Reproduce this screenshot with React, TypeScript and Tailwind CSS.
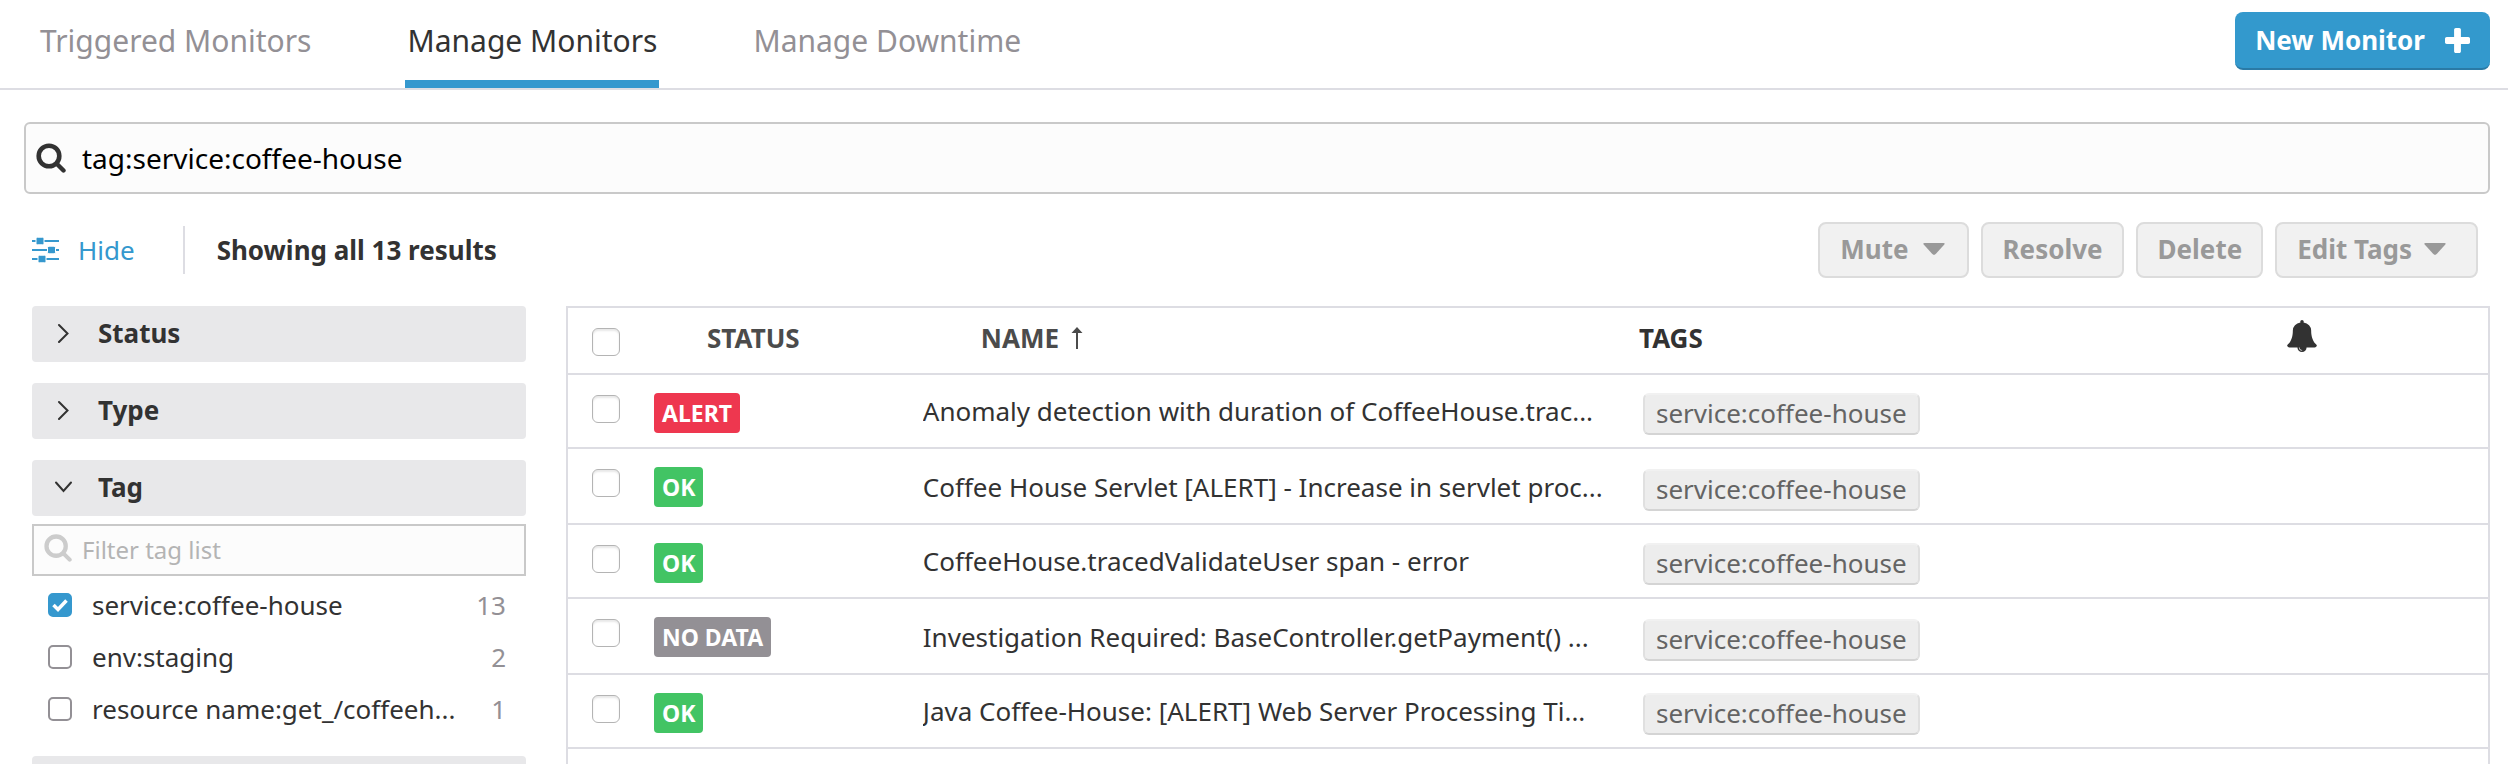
import { useState } from "react";
import type { ReactNode } from "react";

type Status = "ALERT" | "OK" | "NO DATA";

const monitors: { status: Status; name: string; tag: string }[] = [
  { status: "ALERT", name: "Anomaly detection with duration of CoffeeHouse.trac...", tag: "service:coffee-house" },
  { status: "OK", name: "Coffee House Servlet [ALERT] - Increase in servlet proc...", tag: "service:coffee-house" },
  { status: "OK", name: "CoffeeHouse.tracedValidateUser span - error", tag: "service:coffee-house" },
  { status: "NO DATA", name: "Investigation Required: BaseController.getPayment() ...", tag: "service:coffee-house" },
  { status: "OK", name: "Java Coffee-House: [ALERT] Web Server Processing Ti...", tag: "service:coffee-house" },
];

const statusColors: Record<Status, string> = {
  ALERT: "bg-[#ee374f]",
  OK: "bg-[#42c464]",
  "NO DATA": "bg-[#939095]",
};

const tagFilters = [
  { label: "service:coffee-house", count: 13, checked: true },
  { label: "env:staging", count: 2, checked: false },
  { label: "resource name:get_/coffeeh...", count: 1, checked: false },
];

const tabs = [
  { label: "Triggered Monitors", active: false },
  { label: "Manage Monitors", active: true },
  { label: "Manage Downtime", active: false },
];

function SearchIcon({ className }: { className: string }) {
  return (
    <svg viewBox="0 0 30 30" className={className} fill="none" stroke="currentColor" strokeLinecap="round" aria-hidden="true">
      <circle cx="13" cy="13" r="10.3" strokeWidth="4.6" />
      <path d="M21 21l6.500 6.500" strokeWidth="4.4" />
    </svg>
  );
}

function PlusIcon() {
  return (
    <svg viewBox="192 128 1408 1408" className="size-[25px]" fill="currentColor" aria-hidden="true">
      <path d="M1600 736v192q0 40-28 68t-68 28h-416v416q0 40-28 68t-68 28h-192q-40 0-68-28t-28-68v-416h-416q-40 0-68-28t-28-68v-192q0-40 28-68t68-28h416v-416q0-40 28-68t68-28h192q40 0 68 28t28 68v416h416q40 0 68 28t28 68z" />
    </svg>
  );
}

function BellIcon() {
  return (
    <svg viewBox="64 0 1664 1792" className="mx-auto h-8 w-[30px]" fill="currentColor" role="img" aria-label="Muted">
      <path d="M912 1696q0-16-16-16-59 0-101.5-42.5t-42.5-101.5q0-16-16-16t-16 16q0 73 51.5 124.5t124.5 51.5q16 0 16-16zm816-288q0 52-38 90t-90 38h-448q0 106-75 181t-181 75-181-75-75-181h-448q-52 0-90-38t-38-90q50-42 91-88t85-119.5 74.5-158.5 50-206 19.5-260q0-152 117-282.5t307-158.5q-8-19-8-39 0-40 28-68t68-28 68 28 28 68q0 20-8 39 190 28 307 158.5t117 282.5q0 139 19.5 260t50 206 74.5 158.5 85 119.5 91 88z" />
    </svg>
  );
}

function SlidersIcon() {
  return (
    <svg viewBox="0 0 28 26" className="h-[26px] w-7" fill="currentColor" aria-hidden="true">
      <path d="M0 3h27v2H0zM0 12h27v2H0zM0 21h27v2H0z" />
      <g stroke="#fff" strokeWidth="1">
        <rect x="4" y="0.200" width="8" height="7.600" rx="1.500" />
        <rect x="15.500" y="9.200" width="8" height="7.600" rx="1.500" />
        <rect x="6" y="18.200" width="8" height="7.600" rx="1.500" />
      </g>
    </svg>
  );
}

function CaretIcon() {
  return (
    <svg viewBox="0 0 22 12" className="h-3 w-[22px]" fill="currentColor" aria-hidden="true">
      <path d="M1.500 0h19q1.800 0 .8 1.500l-8.600 9.600q-1.700 1.600-3.400 0L.7 1.500Q-.3 0 1.500 0z" />
    </svg>
  );
}

function ChevronIcon({ open }: { open: boolean }) {
  return (
    <svg viewBox="0 0 20 20" className="size-5" fill="none" stroke="currentColor" strokeWidth="2" strokeLinecap="round" aria-hidden="true">
      <path d={open ? "M2 5.500l7.500 8.500 7.500-8.500" : "M5 2l8.500 8.500-8.500 8.500"} />
    </svg>
  );
}

function SortArrow() {
  return (
    <svg viewBox="0 0 12 22" className="h-[22px] w-3" fill="currentColor" aria-hidden="true">
      <path d="M6 0l5.500 6H7v16H5V6H.5z" />
    </svg>
  );
}

function ActionButton({ className, children }: { className?: string; children: ReactNode }) {
  return (
    <button
      type="button"
      disabled
      className={`flex h-14 items-center rounded-lg border-2 border-[#dcdcdc] bg-[#f1f1f1] pb-0.5 pl-5 text-[26px] font-bold text-[#999] ${className ?? ""}`}
    >
      {children}
    </button>
  );
}

function FilterHeader({ label, open = false }: { label: string; open?: boolean }) {
  return (
    <button
      type="button"
      aria-expanded={open}
      className="flex h-14 w-full items-center gap-6 rounded-sm bg-[#e8e8ea] px-[22px] pb-0.5 text-left text-[26px] font-bold"
    >
      <ChevronIcon open={open} />
      {label}
    </button>
  );
}

function TagFilter({ label, count, initial }: { label: string; count: number; initial: boolean }) {
  const [checked, setChecked] = useState(initial);
  return (
    <label className="flex h-[52px] items-center gap-5 px-4">
      <span className="relative flex size-6">
        <input
          type="checkbox"
          checked={checked}
          onChange={() => setChecked(!checked)}
          className="size-6 appearance-none rounded-[5px] border-2 border-[#939095] bg-white checked:border-[#3598ce] checked:bg-[#3598ce]"
        />
        {checked && (
          <svg viewBox="0 0 24 24" className="pointer-events-none absolute inset-0 size-6" fill="none" stroke="white" strokeWidth="3.500" aria-hidden="true">
            <path d="M5.500 12l4.500 4.500 8.500-9" />
          </svg>
        )}
      </span>
      <span className="flex-1 truncate">{label}</span>
      <span className="pr-1 text-[#939095]">{count}</span>
    </label>
  );
}

function RowCheckbox({ label }: { label: string }) {
  return (
    <input
      type="checkbox"
      aria-label={label}
      className="block size-7 appearance-none rounded-[6px] border border-[#b4b4b4] bg-white shadow-[inset_0_2px_2px_#e8e8e8] checked:bg-[#3598ce]"
    />
  );
}

export default function App() {
  const [query, setQuery] = useState("tag:service:coffee-house");

  return (
    <div className="flex h-screen flex-col overflow-hidden bg-white font-['Noto_Sans',sans-serif] text-[26px] leading-9 text-[#323232]">
      <header className="flex h-[90px] shrink-0 justify-between border-b-2 border-[#dddde3] pr-[18px] pl-[38px]">
        <nav className="flex gap-[92px] text-[30px]">
          {tabs.map((tab) => (
            <a
              key={tab.label}
              href="#"
              className={`flex items-center border-b-8 px-0.5 pt-0.5 ${
                tab.active ? "border-[#3598ce] text-[#323232]" : "border-transparent text-[#939095]"
              }`}
            >
              {tab.label}
            </a>
          ))}
        </nav>
        <button
          type="button"
          className="mt-3 flex h-[58px] items-center gap-5 rounded-lg border-b-2 border-[#2a7aa6] bg-[#3399cd] px-5 text-[26px] font-bold text-white"
        >
          New Monitor
          <PlusIcon />
        </button>
      </header>

      <div className="pt-8 pr-[18px] pl-6">
        <label className="flex h-[72px] items-center gap-4 rounded-md border-2 border-[#c9c9c9] bg-[#fcfcfc] px-[10px]">
          <SearchIcon className="size-[30px]" />
          <input
            type="text"
            aria-label="Search monitors"
            value={query}
            onChange={(e) => setQuery(e.target.value)}
            className="flex-1 bg-transparent text-[28px] text-black outline-none"
          />
        </label>
      </div>

      <div className="flex items-center justify-between pt-7 pr-[30px] pl-8">
        <div className="flex h-12 items-center">
          <button type="button" className="flex items-center gap-[18px] pr-12 text-[#3598ce]">
            <SlidersIcon />
            Hide
          </button>
          <div className="flex h-12 items-center border-l-2 border-[#dddde3] pl-8 font-bold">Showing all 13 results</div>
        </div>
        <div className="flex gap-3">
          <ActionButton className="gap-[14px] pr-[22px]">
            Mute
            <CaretIcon />
          </ActionButton>
          <ActionButton className="pr-[19px]">Resolve</ActionButton>
          <ActionButton className="pr-[19px]">Delete</ActionButton>
          <ActionButton className="gap-3 pr-[30px]">
            Edit Tags
            <CaretIcon />
          </ActionButton>
        </div>
      </div>

      <main className="flex min-h-0 flex-1 gap-10 pt-7 pr-[18px] pl-8">
        <aside className="flex w-[494px] shrink-0 flex-col">
          <div className="flex flex-col gap-[21px]">
            <FilterHeader label="Status" />
            <FilterHeader label="Type" />
            <FilterHeader label="Tag" open />
          </div>
          <label className="mt-2 flex h-[52px] shrink-0 items-center gap-[10px] border-2 border-[#c9c9c9] bg-[#fcfcfc] px-[10px]">
            <SearchIcon className="mb-1 size-7 text-[#ccc]" />
            <input
              type="text"
              aria-label="Filter tag list"
              placeholder="Filter tag list"
              className="min-w-0 flex-1 bg-transparent text-[24px] outline-none placeholder:text-[#b4b4b4]"
            />
          </label>
          <div className="flex flex-col pt-[3px] pb-[21px]">
            {tagFilters.map((tag) => (
              <TagFilter key={tag.label} label={tag.label} count={tag.count} initial={tag.checked} />
            ))}
          </div>
          <button type="button" aria-label="More filters" className="h-14 shrink-0 rounded-sm bg-[#e8e8ea]" />
        </aside>

        <section className="min-w-0 flex-1 border-2 border-b-0 border-[#dddde3]">
          <table className="w-full table-fixed border-collapse text-left">
            <colgroup>
              <col className="w-[86px]" />
              <col className="w-[14%]" />
              <col className="w-[37.3%]" />
              <col />
              <col className="w-[19.4%]" />
            </colgroup>
            <thead>
              <tr className="h-[66px] border-b-2 border-[#dddde3] align-top">
                <th className="pt-5 pl-6">
                  <RowCheckbox label="Select all monitors" />
                </th>
                <th className="pt-3 pl-[53px] font-bold text-[#4b4b4b]">STATUS</th>
                <th className="pt-3 pl-[58px] font-bold text-[#4b4b4b]">
                  <span className="flex items-center gap-3">
                    NAME
                    <SortArrow />
                  </span>
                </th>
                <th className="pt-3 font-bold">TAGS</th>
                <th className="pt-3">
                  <BellIcon />
                </th>
              </tr>
            </thead>
            <tbody>
              {monitors.map((monitor) => (
                <tr key={monitor.name} className="group h-[74px] border-b-2 border-[#dddde3] align-top even:h-[76px]">
                  <td className="pt-5 pl-6">
                    <RowCheckbox label={monitor.name} />
                  </td>
                  <td className="pt-[18px]">
                    <span
                      className={`inline-flex h-10 items-center rounded-sm px-2 align-top text-[23px] font-bold text-white ${statusColors[monitor.status]}`}
                    >
                      {monitor.status}
                    </span>
                  </td>
                  <td className="truncate pt-[18px] group-even:pt-5">{monitor.name}</td>
                  <td className="pt-[18px] pl-1 group-even:pt-5">
                    <span className="inline-flex h-[42px] items-center rounded-md border-2 border-t-[#f1f1f1] border-r-[#e0e0e0] border-b-[#d4d4d4] border-l-[#e0e0e0] bg-[#ededed] px-[11px] pb-0.5 align-top text-[#646464]">
                      {monitor.tag}
                    </span>
                  </td>
                  <td />
                </tr>
              ))}
            </tbody>
          </table>
        </section>
      </main>
    </div>
  );
}
